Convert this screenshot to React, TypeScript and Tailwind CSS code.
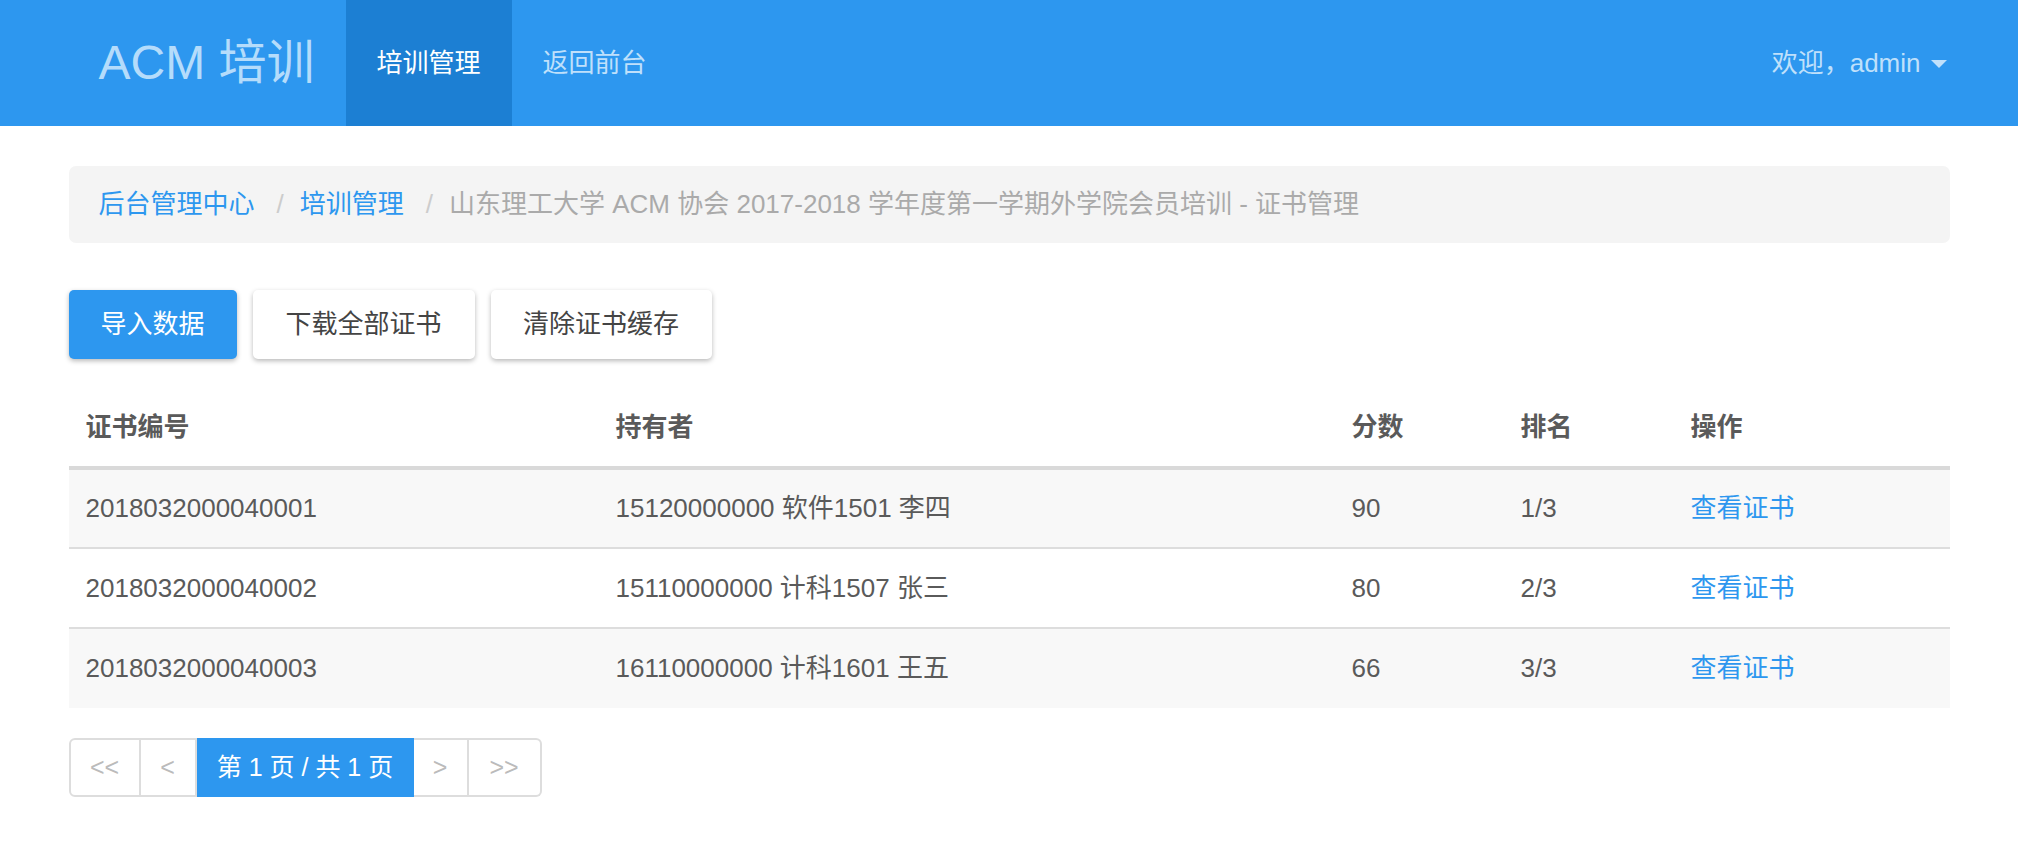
const font = { fontFamily: '"Liberation Sans", "Noto Sans CJK SC", sans-serif' };

const rows = [
  { id: '2018032000040001', owner: '15120000000 软件1501 李四', score: '90', rank: '1/3' },
  { id: '2018032000040002', owner: '15110000000 计科1507 张三', score: '80', rank: '2/3' },
  { id: '2018032000040003', owner: '16110000000 计科1601 王五', score: '66', rank: '3/3' },
];

function Navbar() {
  return (
    <nav className="h-[126px] bg-[#2d97ef]">
      <div className="mx-auto flex h-full w-[1881px] items-stretch justify-between">
        <div className="flex items-stretch">
          <a className="flex items-center pl-[30px] pr-[31px] text-[48px] text-[#b5dcfb]">ACM 培训</a>
          <a className="flex items-center bg-[#1c7fd3] px-[31px] text-[26px] text-white">培训管理</a>
          <a className="flex items-center px-[31px] text-[26px] text-[#bfe0fb]">返回前台</a>
        </div>
        <a className="flex items-center gap-[10px] pr-[3px] text-[26px] text-[#bfe0fb]">
          <span>欢迎，admin</span>
          <span className="mt-[2px] h-0 w-0 border-x-[8px] border-t-[8px] border-x-transparent border-t-[#bfe0fb]" />
        </a>
      </div>
    </nav>
  );
}

function Breadcrumb() {
  return (
    <div className="mt-[40px] flex h-[77px] items-center rounded-[7px] bg-[#f4f4f4] px-[30px] text-[26px]">
      <a className="text-[#2d97ef]">后台管理中心</a>
      <span className="pl-[22px] pr-[16px] text-[#cccccc]">/</span>
      <a className="text-[#2d97ef]">培训管理</a>
      <span className="pl-[22px] pr-[16px] text-[#cccccc]">/</span>
      <span className="text-[#aaaaaa]">山东理工大学 ACM 协会 2017-2018 学年度第一学期外学院会员培训 - 证书管理</span>
    </div>
  );
}

function Actions() {
  return (
    <div className="mt-[47px] flex gap-[16px]">
      <button className="h-[69px] w-[168px] rounded-[5px] bg-[#2d97ef] text-[26px] text-white shadow-[0_2px_5px_rgba(0,0,0,0.28)]">
        导入数据
      </button>
      <button className="h-[69px] w-[222px] rounded-[5px] bg-white text-[26px] text-[#444] shadow-[0_2px_5px_rgba(0,0,0,0.28)]">
        下载全部证书
      </button>
      <button className="h-[69px] w-[221px] rounded-[5px] bg-white text-[26px] text-[#444] shadow-[0_2px_5px_rgba(0,0,0,0.28)]">
        清除证书缓存
      </button>
    </div>
  );
}

function CertTable() {
  return (
    <table className="mt-[30px] w-full table-fixed border-collapse text-[26px] text-[#5a5a5a]">
      <thead>
        <tr className="h-[79px] border-b-[4px] border-[#d9d9d9] text-left">
          <th className="w-[530px] px-[17px] font-bold">证书编号</th>
          <th className="w-[736px] px-[17px] font-bold">持有者</th>
          <th className="w-[169px] px-[17px] font-bold">分数</th>
          <th className="w-[170px] px-[17px] font-bold">排名</th>
          <th className="px-[17px] font-bold">操作</th>
        </tr>
      </thead>
      <tbody>
        {rows.map((r, i) => (
          <tr
            key={r.id}
            className={`h-[80px] ${i > 0 ? 'border-t-[2px] border-[#dddddd]' : ''} ${i % 2 === 0 ? 'bg-[#f8f8f8]' : 'bg-white'}`}
          >
            <td className="px-[17px]">{r.id}</td>
            <td className="px-[17px]">{r.owner}</td>
            <td className="px-[17px]">{r.score}</td>
            <td className="px-[17px]">{r.rank}</td>
            <td className="px-[17px]">
              <a className="text-[#2d97ef]">查看证书</a>
            </td>
          </tr>
        ))}
      </tbody>
    </table>
  );
}

function Pager() {
  return (
    <div className="mt-[30px] flex h-[59px] w-[473px] text-[25px]">
      <span className="flex w-[72px] items-center justify-center rounded-l-[6px] border-[2px] border-[#dddddd] text-[#bbbbbb]">&lt;&lt;</span>
      <span className="flex w-[56px] items-center justify-center border-y-[2px] border-r-[2px] border-[#dddddd] text-[#bbbbbb]">&lt;</span>
      <span className="flex w-[217px] items-center justify-center bg-[#2d97ef] text-white">第 1 页 / 共 1 页</span>
      <span className="flex w-[55px] items-center justify-center border-y-[2px] border-r-[2px] border-[#dddddd] text-[#bbbbbb]">&gt;</span>
      <span className="flex w-[73px] items-center justify-center rounded-r-[6px] border-y-[2px] border-r-[2px] border-[#dddddd] text-[#bbbbbb]">&gt;&gt;</span>
    </div>
  );
}

export default function App() {
  return (
    <div className="min-h-[846px] bg-white" style={font}>
      <Navbar />
      <div className="mx-auto w-[1881px]">
        <Breadcrumb />
        <Actions />
        <CertTable />
        <Pager />
      </div>
    </div>
  );
}
